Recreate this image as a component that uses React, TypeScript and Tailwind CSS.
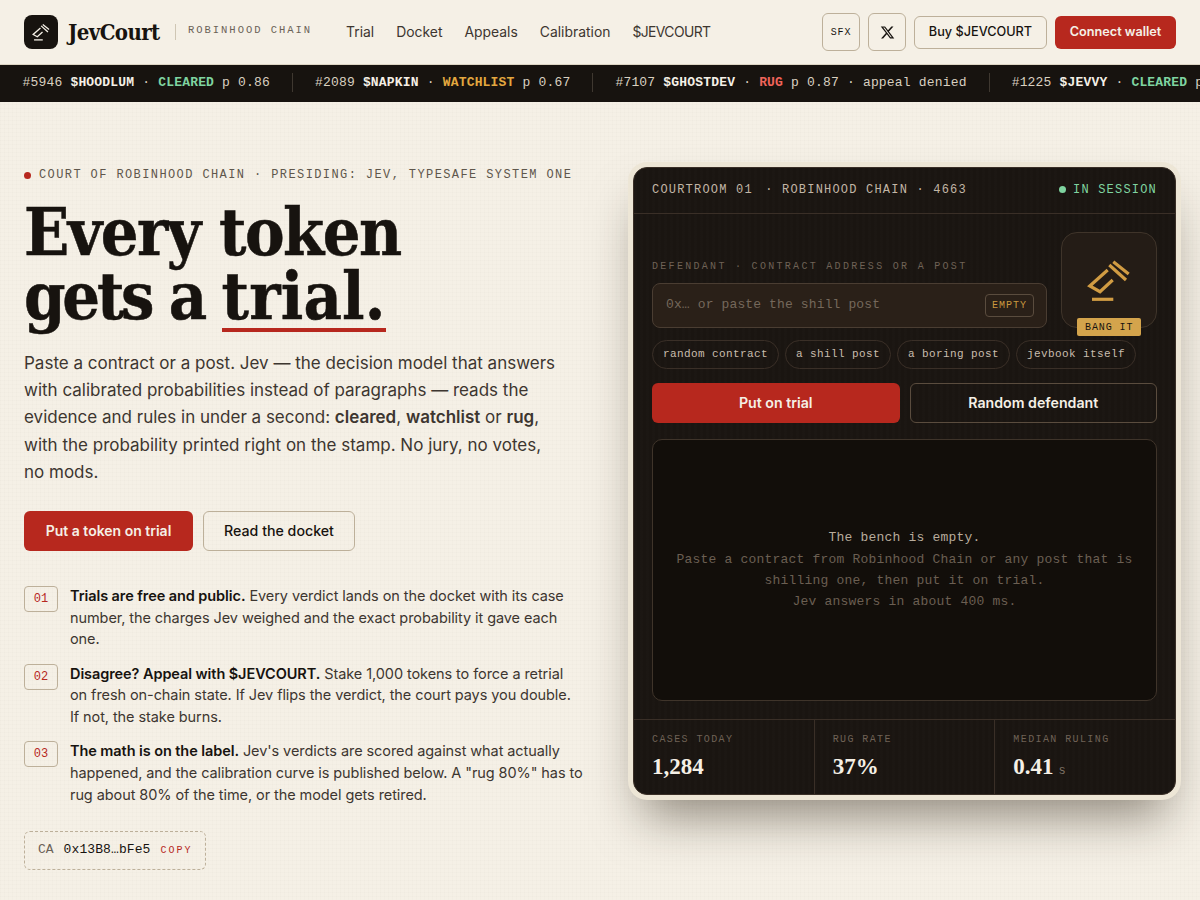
const mono = "font-['Liberation_Mono',monospace]";
const serif = "font-['DejaVu_Serif_Condensed','DejaVu_Serif',serif]";
const num = "font-['Liberation_Serif',serif]";

function Gavel({ className }: { className?: string }) {
  return (
    <svg viewBox="0 0 44 44" fill="none" stroke="currentColor" strokeWidth="3.2" className={className}>
      <path d="M22.3 7 L39 22 M26.3 3.7 L41.7 16" />
      <path d="M20.7 12 L2.8 28 L13 33.7 L25.7 22" />
      <path d="M5 41.3 H26.3" />
    </svg>
  );
}

function Stat({ label, value, unit, border }: { label: string; value: string; unit?: string; border?: boolean }) {
  return (
    <div className={`flex-1 px-[18px] pt-[13px] ${border ? "border-l border-[#3a2f27]" : ""}`}>
      <div className={`${mono} text-[10px] tracking-[1.4px] text-[#6f6256] leading-[14px]`}>{label}</div>
      <div className={`${num} mt-[4px] text-[23px] leading-[32px] font-bold text-[#f5f0e6]`}>
        {value}
        {unit && <span className={`${mono} ml-[5px] text-[12px] font-normal text-[#7d7064]`}>{unit}</span>}
      </div>
    </div>
  );
}

function Chip({ children }: { children: string }) {
  return (
    <span className={`${mono} rounded-full border border-[#3a2f27] px-[10px] pb-[1px] h-[29px] flex items-center text-[11px] tracking-[0.4px] text-[#c9bdae]`}>
      {children}
    </span>
  );
}

function Row({ n, title, children }: { n: string; title: string; children: string }) {
  return (
    <div className="flex gap-[12px]">
      <div className={`${mono} shrink-0 mt-[1px] w-[34px] h-[26px] rounded-[4px] border border-[#bdb09a] flex items-center justify-center text-[12px] text-[#b7281e]`}>{n}</div>
      <p className="text-[14.5px] leading-[1.5] tracking-[-0.08px] text-[#3d3630]">
        <b className="font-semibold text-[#17130f]">{title}</b> {children}
      </p>
    </div>
  );
}

function Tick({ id, sym, verdict, color, rest, last }: { id: string; sym: string; verdict: string; color: string; rest: string; last?: boolean }) {
  return (
    <div className={`flex items-center shrink-0 ${mono} text-[13px] tracking-[0.18px] text-[#d9d0c0] whitespace-pre`}>
      <span>{id} </span>
      <b className="text-[#f5f0e6]">{sym}</b>
      <span> · </span>
      <b className={color}>{verdict}</b>
      <span> {rest}</span>
      {!last && <span className="mx-[22px] h-[19px] w-px bg-[#3f3830]" />}
    </div>
  );
}

export default function App() {
  return (
    <div className="min-h-[900px] font-['Inter',sans-serif] text-[#17130f] bg-[#f5f0e6] bg-[linear-gradient(rgba(60,50,30,0.012)_1px,transparent_1px),linear-gradient(90deg,rgba(60,50,30,0.012)_1px,transparent_1px)] bg-[size:4px_4px] overflow-hidden">
      <header className="h-[65px] bg-[#f5f0e6] border-b border-[#ddd5c4] px-[24px] flex items-center">
        <div className="w-[34px] h-[34px] rounded-[8px] bg-[#17130f] text-[#f5f0e6] flex items-center justify-center">
          <Gavel className="w-[18px] h-[18px]" />
        </div>
        <span className={`${serif} ml-[10px] w-[94px] text-[22px] font-bold tracking-[-0.6px] whitespace-nowrap`}>JevCourt</span>
        <span className="ml-[13px] h-[16px] w-px bg-[#cfc6b4]" />
        <span className={`${mono} ml-[12px] -mt-[3px] text-[10.5px] tracking-[1.97px] text-[#6b6257]`}>ROBINHOOD CHAIN</span>
        <nav className="ml-[34px] flex gap-[22px] text-[13.9px] text-[#3d3630]">
          <span>Trial</span><span>Docket</span><span>Appeals</span><span>Calibration</span><span className="tracking-[-0.6px]">$JEVCOURT</span>
        </nav>
        <div className="ml-auto flex items-center gap-[8px]">
          <div className={`${mono} w-[38px] h-[38px] rounded-[6px] border border-[#bdb09a] flex items-center justify-center text-[10px] tracking-[0.8px]`}>SFX</div>
          <div className="w-[38px] h-[38px] rounded-[6px] border border-[#bdb09a] flex items-center justify-center">
            <svg viewBox="0 0 24 24" className="w-[15px] h-[15px]" fill="currentColor"><path d="M18.244 2.25h3.308l-7.227 8.26 8.502 11.24H16.17l-5.214-6.817L4.99 21.75H1.68l7.73-8.835L1.254 2.25H8.08l4.713 6.231zm-1.161 17.52h1.833L7.084 4.126H5.117z" /></svg>
          </div>
          <div className="h-[33px] w-[133px] justify-center rounded-[6px] border border-[#bdb09a] flex items-center text-[12.7px] font-medium">Buy $JEVCOURT</div>
          <div className="h-[33px] w-[121px] justify-center rounded-[6px] bg-[#b7281e] text-[#f5f0e6] flex items-center text-[12.7px] font-semibold">Connect wallet</div>
        </div>
      </header>

      <div className="h-[37px] bg-[#17130f] pl-[22.5px] pb-[2px] flex items-center overflow-hidden">
        <Tick id="#5946" sym="$HOODLUM" verdict="CLEARED" color="text-[#7fd4a0]" rest="p 0.86" />
        <Tick id="#2089" sym="$NAPKIN" verdict="WATCHLIST" color="text-[#e3a83f]" rest="p 0.67" />
        <Tick id="#7107" sym="$GHOSTDEV" verdict="RUG" color="text-[#f0645a]" rest="p 0.87 · appeal denied" />
        <Tick id="#1225" sym="$JEVVY" verdict="CLEARED" color="text-[#7fd4a0]" rest="p 0.91" last />
      </div>

      <main className="px-[24px] pt-[65px] grid grid-cols-[1fr_543px] gap-[48px]">
        <section>
          <div className={`${mono} mt-[1px] flex items-center gap-[8px] text-[12px] tracking-[1.4px] text-[#5f574c] h-[14px]`}>
            <span className="w-[7px] h-[7px] rounded-full bg-[#b7281e]" />
            COURT OF ROBINHOOD CHAIN · PRESIDING: JEV, TYPESAFE SYSTEM ONE
          </div>
          <h1 className={`${serif} mt-[19px] text-[66px] leading-[63px] font-bold tracking-[-1.5px] [-webkit-text-stroke:0.5px_#17130f]`}>
            Every token<br /><span className="tracking-[-3.2px]">gets a </span><span className="border-b-[4px] border-[#b7281e] inline-block leading-[64px] tracking-[0.2px]">trial.</span>
          </h1>
          <p className="mt-[18px] max-w-[535px] text-[17px] leading-[1.6] text-[#3d3630]">
            Paste a contract or a post. Jev — the decision model that answers with calibrated probabilities instead of paragraphs — reads the evidence and rules in under a second: <b className="font-semibold">cleared</b>, <b className="font-semibold">watchlist</b> or <b className="font-semibold">rug</b>, with the probability printed right on the stamp. No jury, no votes, no mods.
          </p>
          <div className="mt-[25px] flex gap-[10px]">
            <div className="h-[40px] w-[169px] rounded-[6px] bg-[#b7281e] text-[#f5f0e6] flex items-center justify-center text-[14px] font-semibold">Put a token on trial</div>
            <div className="h-[40px] w-[152px] rounded-[6px] border border-[#bdb09a] flex items-center justify-center text-[14.2px] font-medium">Read the docket</div>
          </div>
          <div className="mt-[34px] flex flex-col gap-[12.5px]">
            <Row n="01" title="Trials are free and public.">Every verdict lands on the docket with its case number, the charges Jev weighed and the exact probability it gave each one.</Row>
            <Row n="02" title="Disagree? Appeal with $JEVCOURT.">{"Stake 1,000 tokens to force a retrial on\u00a0fresh on-chain state. If Jev flips the verdict, the court pays you double. If\u00a0not, the stake burns."}</Row>
            <Row n="03" title="The math is on the label.">Jev's verdicts are scored against what actually happened, and the calibration curve is published below. A "rug 80%" has to rug about 80% of the time, or the model gets retired.</Row>
          </div>
          <div className={`${mono} mt-[25px] w-[182px] h-[39px] pl-[13px] rounded-[6px] border border-dashed border-[#bdb09a] flex items-center text-[13px] gap-[10px]`}>
            <span className="text-[#6b6257]">CA</span>
            <span className="tracking-[0.1px]">0x13B8…bFe5</span>
            <span className="text-[10px] tracking-[2px] text-[#b7281e]">COPY</span>
          </div>
        </section>

        <section className="h-[628px] rounded-[14px] border border-[#3a2f27] flex flex-col text-[#f5f0e6] bg-[#1a1511] bg-[repeating-linear-gradient(90deg,rgba(255,255,255,0.008)_0,rgba(255,255,255,0.008)_3px,transparent_3px,transparent_6px)] shadow-[0_0_0_5px_#ede6d6,0_30px_50px_-10px_rgba(40,30,15,0.5)]">
          <div className={`${mono} h-[46px] px-[18px] pb-[2px] border-b border-[#3a2f27] flex items-center justify-between text-[12px] tracking-[1.2px] text-[#c2b6a6]`}>
            <span className="whitespace-pre">COURTROOM 01<span className="ml-[4px]"> · </span>ROBINHOOD CHAIN · 4663</span>
            <span className="flex items-center gap-[7px] text-[#7fd4a0]"><span className="w-[7px] h-[7px] rounded-full bg-[#7fd4a0]" />IN SESSION</span>
          </div>
          <div className="flex-1 px-[18px] pt-[18px] pb-[18px] flex flex-col">
            <div className="flex gap-[14px]">
              <div className="flex-1 pt-[29px]">
                <div className={`${mono} text-[10px] leading-[12px] tracking-[2.3px] text-[#6f6256] whitespace-nowrap`}>DEFENDANT · CONTRACT ADDRESS OR A POST</div>
                <div className="mt-[10px] h-[45px] rounded-[8px] border border-[#4a3d32] bg-[#2a2018] pl-[13px] pr-[12px] flex items-center justify-between">
                  <span className={`${mono} -mt-[2px] text-[13px] tracking-[0.01em] text-[#75685b]`}>0x… or paste the shill post</span>
                  <span className={`${mono} h-[23px] px-[6px] rounded-[4px] border border-[#5a4c3e] flex items-center text-[10px] tracking-[1px] text-[#c9983f]`}>EMPTY</span>
                </div>
              </div>
              <div className="relative w-[96px] h-[96px] rounded-[16px] border border-[#3f342a] bg-[#241c16] flex items-center justify-center text-[#d19c43]">
                <Gavel className="w-[44px] h-[44px]" />
                <span className={`${mono} absolute left-[15px] bottom-[-9px] h-[18px] px-[8px] rounded-[2px] bg-[#d4a44c] text-[#17130f] flex items-center text-[10px] tracking-[0.9px]`}>BANG IT</span>
              </div>
            </div>
            <div className="mt-[12px] flex gap-[6px]">
              <Chip>random contract</Chip><Chip>a shill post</Chip><Chip>a boring post</Chip><Chip>jevbook itself</Chip>
            </div>
            <div className="mt-[14px] grid grid-cols-2 gap-[10px]">
              <div className="h-[40px] rounded-[6px] bg-[#b7281e] flex items-center justify-center text-[14.2px] font-semibold">Put on trial</div>
              <div className="h-[40px] rounded-[6px] border border-[#5a4c3e] flex items-center justify-center text-[14.2px] font-semibold">Random defendant</div>
            </div>
            <div className="mt-[16px] pb-[2px] flex-1 rounded-[10px] border border-[#3f342a] bg-[#120e0a] flex flex-col items-center justify-center text-center px-[20px]">
              <div className={`${mono} text-[13px] tracking-[0.2px] text-[#b8ac9c] leading-[21px]`}>The bench is empty.</div>
              <div className={`${mono} mt-[1px] text-[13px] tracking-[0.2px] leading-[21px] text-[#6b5f52]`}>
                Paste a contract from Robinhood Chain or any post that is<br />shilling one, then put it on trial.<br />Jev answers in about 400 ms.
              </div>
            </div>
          </div>
          <div className="border-t border-[#3a2f27] flex h-[75px]">
            <Stat label="CASES TODAY" value="1,284" />
            <Stat label="RUG RATE" value="37%" border />
            <Stat label="MEDIAN RULING" value="0.41" unit="s" border />
          </div>
        </section>
      </main>
    </div>
  );
}
